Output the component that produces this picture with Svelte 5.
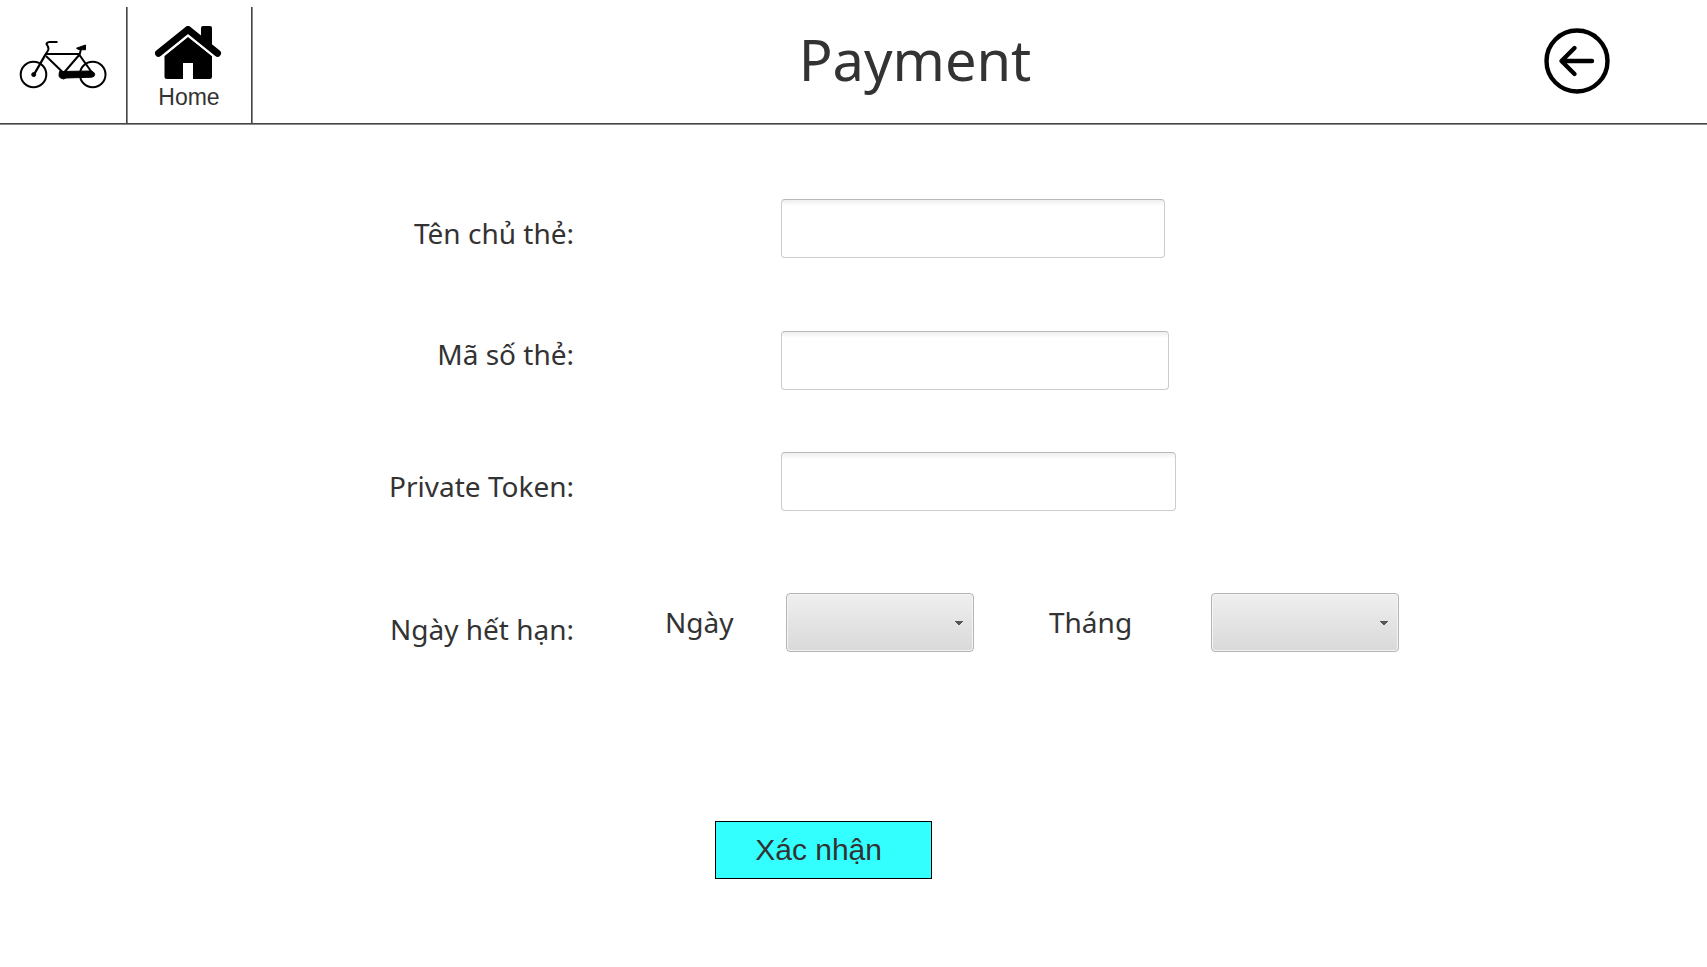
<script>
  const fields = [
    { id: 'owner', label: 'Tên chủ thẻ:', size: 'small' },
    { id: 'number', label: 'Mã số thẻ:', size: 'medium' },
    { id: 'token', label: 'Private Token:', size: 'large' }
  ];
  const days = Array.from({ length: 31 }, (_, i) => i + 1);
  const months = Array.from({ length: 12 }, (_, i) => i + 1);

  let values = $state({ owner: '', number: '', token: '' });
  let day = $state('');
  let month = $state('');
</script>

<header>
  <nav>
    <a class="tab" href="#bikes" aria-label="Bikes">
      <svg width="90" height="54" viewBox="18 37 90 54" fill="none" stroke="#000" stroke-width="2">
        <circle cx="33.5" cy="74.5" r="12.8" />
        <circle cx="92.7" cy="74.5" r="12.8" />
        <path d="M57.5 42H50q-3 0-3.500 2l1.200 2q1.500 3 0 5l-2.200 3.500" />
        <path d="M45.500 54.500 34 74.500" stroke-width="2.400" />
        <path d="M45 54h35M46 56l16.500 16M80 54 64.500 72M81 49l-1.500 6L93 74" />
        <path d="M76.500 48.200 85.500 45v4.800l-7-.3z" fill="#000" stroke-width="1" />
        <path d="M59.500 71.500 90 71q4.500.5 4.700 3.500-.2 2.600-3.200 2.700L66 78l-2.500 1-3-1q-1.500-1-1.500-3z" fill="#000" stroke-width="1" />
        <circle cx="33.700" cy="74.600" r="2" fill="#000" stroke-width="1" />
      </svg>
    </a>
    <a class="tab home" href="#home">
      <svg width="68" height="54" viewBox="155 26 68 54">
        <path d="M201 46V28q0-2 2-2h7q2 0 2 2v20z" />
        <path d="M164.500 56 188 37l24 19v20.500q0 2.500-2.500 2.500H193V63h-10v16h-16q-2.500 0-2.500-2.500z" />
        <path d="M158.500 55.500 188 31.500l29.500 24" fill="none" stroke="#fff" stroke-width="8" />
        <path d="M158.500 53.200 188 29.500l29.500 23.700" fill="none" stroke="#000" stroke-width="7" stroke-linecap="round" stroke-linejoin="round" />
      </svg>
      <span>Home</span>
    </a>
  </nav>
  <h1>Payment</h1>
  <button class="back" type="button" aria-label="Back">
    <svg width="66" height="66" viewBox="0 0 66 66" fill="none" stroke="#000">
      <circle cx="33" cy="33" r="30.500" stroke-width="4.400" />
      <path d="M48 33H18M30.500 20 17.500 33l13 13" stroke-width="4.400" stroke-linecap="round" stroke-linejoin="round" />
    </svg>
  </button>
</header>

<form onsubmit={(e) => e.preventDefault()}>
  {#each fields as field}
    <div class="row {field.size}">
      <label class="name" for={field.id}>{field.label}</label>
      <input id={field.id} type="text" bind:value={values[field.id]} />
    </div>
  {/each}
  <div class="row expiry" role="group" aria-labelledby="expiry">
    <span class="name" id="expiry">Ngày hết hạn:</span>
    <label class="part" for="day">Ngày</label>
    <select id="day" bind:value={day}>
      <option value=""></option>
      {#each days as d}<option value={d}>{d}</option>{/each}
    </select>
    <label class="part" for="month">Tháng</label>
    <select id="month" bind:value={month}>
      <option value=""></option>
      {#each months as m}<option value={m}>{m}</option>{/each}
    </select>
  </div>
  <button class="confirm" type="submit">Xác nhận</button>
</form>

<style>
  :global(body) {
    background: #fff;
    color: #333;
    font-family: 'Segoe UI', 'Noto Sans', sans-serif;
  }

  header {
    display: flex;
    box-sizing: border-box;
    height: 124px;
    padding: 7px 97px 0 0;
    border-bottom: 1px solid #444;
    box-shadow: 0 1px #8a8a8a;
  }

  nav {
    display: flex;
  }

  .tab {
    display: flex;
    flex-direction: column;
    align-items: center;
    box-sizing: border-box;
    width: 127px;
    padding-top: 30px;
    border-right: 1px solid #444;
    box-shadow: 1px 0 #8a8a8a;
    color: #333;
    text-decoration: none;
  }

  .home {
    width: 125px;
    padding-top: 19px;
    font: 23px/34px 'Liberation Sans', Arial, sans-serif;
  }

  h1 {
    flex: 1;
    margin: 0;
    padding-left: 34px;
    font-size: 56px;
    font-weight: 400;
    line-height: 104px;
    text-align: center;
  }

  .back {
    align-self: flex-start;
    width: 66px;
    height: 66px;
    margin-top: 21px;
    padding: 0;
    border: 0;
    background: none;
  }

  form {
    padding-top: 75px;
  }

  .row {
    display: grid;
    grid-template-columns: 574fr 207fr 926fr;
    align-items: start;
    margin-bottom: 62px;
    font-size: 28px;
    line-height: 40px;
  }

  .row.small {
    margin-bottom: 73px;
  }

  .row.large {
    margin-bottom: 82px;
  }

  .name {
    padding-top: 14px;
    text-align: right;
    white-space: nowrap;
  }

  .medium .name {
    padding-top: 3px;
  }

  input {
    grid-column: 3;
    box-sizing: border-box;
    width: 384px;
    height: 59px;
    padding: 0 12px;
    border: 1px solid #ccc;
    border-top-color: #b9b9b9;
    border-radius: 4px;
    background: linear-gradient(#eee, #fff 6px);
    font: inherit;
  }

  .medium input {
    width: 388px;
  }

  .large input {
    width: 395px;
  }

  .row.expiry {
    grid-template-columns: 574fr 91fr 121fr 263fr 162fr 496fr;
    margin-bottom: 169px;
  }

  .part {
    padding-top: 9px;
  }

  .expiry .name {
    padding-top: 16px;
  }

  #expiry + .part {
    grid-column: 3;
  }

  select {
    box-sizing: border-box;
    width: 188px;
    height: 59px;
    padding: 0 30px 0 12px;
    border: 1px solid #b5b5b5;
    border-radius: 4px;
    appearance: none;
    background:
      conic-gradient(from -45deg at 50% 100%, #555 90deg, transparent 0) right 9px top 27px / 10px 5px no-repeat,
      linear-gradient(#efefef, #d9d9d9);
    box-shadow: inset 0 0 0 1px #f4f4f4;
    font: inherit;
  }

  .confirm {
    display: block;
    box-sizing: border-box;
    width: 217px;
    height: 58px;
    margin-left: 41.9%;
    padding: 0 0 0 39px;
    border: 1px solid #000;
    background: #3ff;
    color: #333;
    font: 30px/56px 'Liberation Sans', Arial, sans-serif;
    text-align: left;
  }
</style>
